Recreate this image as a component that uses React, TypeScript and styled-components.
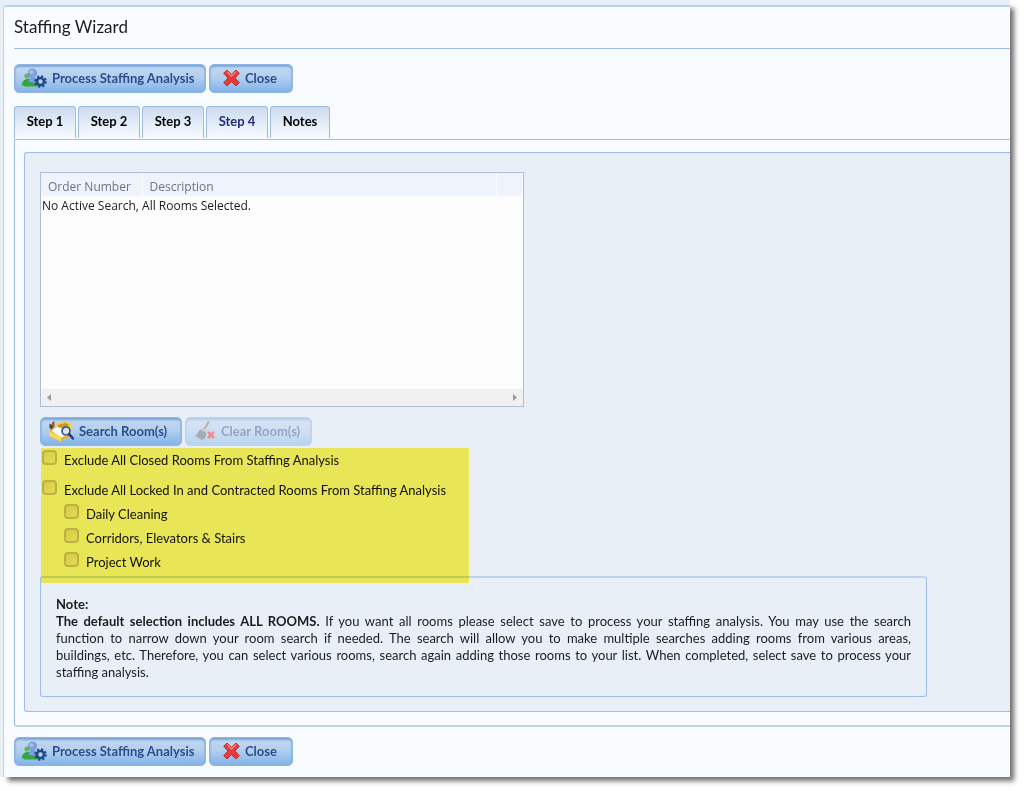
import React, { useState } from "react";
import styled, { createGlobalStyle } from "styled-components";

const line = "#9dbde8";
const softLine = "#bdd3ef";
const paper = "#f8fbff";
const mist = "#e8eff7";

const GlobalStyle = createGlobalStyle`
  *, *::before, *::after { box-sizing: border-box; }
  body {
    margin: 0;
    background: #fff;
    color: #1c1c1c;
    font-family: Lato, "Liberation Sans", sans-serif;
    font-size: 13px;
    line-height: 18px;
  }
`;

const Sheet = styled.main`
  margin: 0 14px 14px 0;
  padding: 5px 0 0 3px;
  background: ${mist};
  box-shadow: 6px 6px 5px -2px #6e6e6e;
`;

const Panel = styled.section`
  padding: 0 0 11px 10px;
  background: ${paper};
  border-top: 2px solid ${softLine};
  border-left: 1px solid ${softLine};
  border-top-left-radius: 3px;
`;

const Title = styled.h1`
  margin: 0 0 15px;
  padding: 8px 0 9px;
  border-bottom: 1px solid ${line};
  font-size: 17px;
  font-weight: 400;
  line-height: 24px;
`;

const Toolbar = styled.div`
  display: flex;
  gap: 3px;
`;

const Button = styled.button<{ $width: number; $inset?: number }>`
  display: flex;
  align-items: center;
  gap: 5px;
  min-width: ${(p) => p.$width}px;
  height: 29px;
  padding: 0 7px 2px ${(p) => p.$inset ?? 7}px;
  border: 1px solid #8db4e3;
  border-radius: 5px;
  background: linear-gradient(#c3d8f0, #b4cfee 45%, #82b3e8);
  box-shadow: inset 0 2px 2px #7aa6dc, inset 0 0 2px #8fb6e4;
  color: #2c4d8c;
  font: 700 13px/18px Lato, "Liberation Sans", sans-serif;
  white-space: nowrap;

  &:disabled {
    opacity: 0.45;
  }
`;

const Tabs = styled.nav`
  display: flex;
  gap: 2px;
  margin-top: 13px;
  padding-bottom: 1px;
`;

const Tab = styled.button<{ $active?: boolean }>`
  min-width: 62px;
  height: 32px;
  padding: 0 8px 3px;
  border: 1px solid ${line};
  border-bottom: 0;
  border-radius: 3px 3px 0 0;
  background: linear-gradient(#cbdbef, ${paper});
  color: ${(p) => (p.$active ? "#1f2d7a" : "#000")};
  font: 700 13px/18px Lato, "Liberation Sans", sans-serif;

  &:last-child {
    min-width: 60px;
  }
`;

const TabBody = styled.div`
  padding: 12px 0 13px 9px;
  border: 1px solid ${line};
  border-right: 0;
  border-bottom: 2px solid ${softLine};
  border-bottom-left-radius: 3px;
  margin-bottom: 10px;
`;

const Inset = styled.div`
  padding: 19px 83px 14px 15px;
  background: ${mist};
  border: 1px solid ${line};
  border-right: 0;
  border-radius: 3px 0 0 3px;
`;

const Grid = styled.div`
  display: flex;
  flex-direction: column;
  justify-content: space-between;
  max-width: 484px;
  min-height: 235px;
  margin-bottom: 10px;
  border: 1px solid #aebfd5;
  background: #fcfcfc;
  font-family: "Open Sans", "Noto Sans", sans-serif;
  font-size: 12px;
`;

const Table = styled.table`
  width: 100%;
  border-collapse: collapse;
  table-layout: fixed;
`;

const HeadCell = styled.th<{ $width?: number }>`
  width: ${(p) => (p.$width ? p.$width + "px" : "auto")};
  height: 23px;
  padding: 4px 0 0 7px;
  background: #eff3fb;
  border-right: 1px solid #fcfdff;
  color: #6a7587;
  font-weight: 400;
  line-height: 18px;
  text-align: left;
`;

const Cell = styled.td`
  padding: 1px;
  line-height: 18px;
`;

const ScrollTrack = styled.div`
  display: flex;
  justify-content: space-between;
  height: 17px;
  background: #f0f0f0;
`;

const ScrollButton = styled.button`
  display: flex;
  align-items: center;
  justify-content: center;
  width: 16px;
  padding: 0;
  border: 0;
  background: none;
`;

const Options = styled.fieldset`
  position: relative;
  margin: 0;
  padding: 0 0 4px 2px;
  border: 0;
`;

const Marker = styled.div`
  position: absolute;
  top: 2px;
  left: 1px;
  width: 428px;
  bottom: -7px;
  background: #fff65a;
  mix-blend-mode: multiply;
  pointer-events: none;
`;

const Option = styled.label<{ $nested?: boolean; $spaced?: boolean }>`
  display: flex;
  gap: 7px;
  height: 24px;
  padding: 4px 0 0 ${(p) => (p.$nested ? 22 : 0)}px;
  margin-bottom: ${(p) => (p.$spaced ? 6 : 0)}px;
  color: #111;
`;

const OptionText = styled.span`
  padding-top: 1px;
`;

const Check = styled.input`
  appearance: none;
  width: 15px;
  height: 15px;
  margin: 0;
  border: 2px solid #bdb9b6;
  border-radius: 4px;
  background: linear-gradient(135deg, #d6d4d4, #e4e4e4);

  &:checked {
    background: #5a7fb5;
  }
`;

const Note = styled.div`
  max-width: 888px;
  padding: 18px 15px 15px;
  border: 1px solid ${line};
  border-top: 2px solid ${softLine};
  border-radius: 3px;
  line-height: 17px;

  p {
    margin: 0;
  }
`;

const NoteLine = styled.span<{ $last?: boolean }>`
  display: block;
  text-align: justify;
  text-align-last: ${(p) => (p.$last ? "left" : "justify")};
`;

const StaffIcon = () => (
  <svg width="25" height="20" viewBox="0 0 25 20" aria-hidden="true">
    <circle cx="5" cy="8" r="2.6" fill="#5cb85a" />
    <path d="M0 17.5c0-4 2-6 5-6.500h5v6.500z" fill="#2fa534" />
    <path d="M2 18.500c0-4 3-6 8.500-6s6 2 6 6z" fill="#35a83a" />
    <path d="M6.500 13.500c0-2 1.500-3.500 3-4C5 7.500 5.500 1 10.500 1s5.500 6.500 1 8.500c2 .5 3.500 2 3.500 4-2 1.500-6.500 1.500-8.500 0z" fill="#7f9fe0" stroke="#6585c8" strokeWidth=".6" />
    <circle cx="9.500" cy="4" r="1.900" fill="#a9c2f2" />
    <circle cx="18.500" cy="13.500" r="3.500" fill="#b8d2ee" stroke="#1f4a86" strokeWidth="2.600" />
    <circle cx="18.500" cy="13.500" r="5.300" fill="none" stroke="#1f4a86" strokeWidth="2" strokeDasharray="2.080 2.080" />
  </svg>
);

const CloseIcon = () => (
  <svg width="17" height="18" viewBox="0 0 17 18" aria-hidden="true">
    <path
      d="M4 1 8.500 5.300 13 1l3.300 3.200L12 9l4.300 4.700L13 17l-4.500-4.300L4 17 .7 13.700 5 9 .7 4.200z"
      fill="#e8393c"
      stroke="#b5342f"
      strokeWidth="1"
      strokeLinejoin="round"
    />
    <path d="M4 2.500 8.500 7 13 2.500" fill="none" stroke="#f58a84" strokeWidth="1.300" />
  </svg>
);

const SearchRoomIcon = () => (
  <svg width="26" height="22" viewBox="0 0 26 22" aria-hidden="true">
    <path d="M8 3.500 18 1l5 3v9H9z" fill="#f0d24a" />
    <path d="M10 4.800 18 3l2.500 1.700V9H10z" fill="#c9962a" />
    <path d="M1 11 4 8.500l18 3.500v4l-9 5.500L1 16z" fill="#e2b72c" />
    <path d="M3.500 11 9 7l12 2.500v5L13 17.500z" fill="#fafafa" />
    <path d="M1 11l12 6.500v4L1 16z" fill="#f6da5c" />
    <path d="M1.500 3.500 4 5v4.500L1.500 8z" fill="#5d3d1c" />
    <path d="M4 2.500 6.500 1v6L4 9z" fill="#8a5f2d" />
    <circle cx="18" cy="11" r="4" fill="#d4e6f8" stroke="#34588f" strokeWidth="1.700" />
    <path d="M21 14l4 4.500" stroke="#203c70" strokeWidth="2.500" strokeLinecap="round" />
  </svg>
);

const ClearRoomIcon = () => (
  <svg width="21" height="20" viewBox="0 0 21 20" aria-hidden="true">
    <path d="M13.500 1 9.500 8" stroke="#8c6a42" strokeWidth="2.200" strokeLinecap="round" />
    <path d="M7 6.500l5.500 3-1.500 3L5 9z" fill="#aaa" />
    <path d="M5 8.500l6.500 3.500-1.500 5.500L6 19l-1-2-1.500 1L3 15.500 0 16z" fill="#555a60" />
    <path d="M13 11l6 6M19 11l-6 6" stroke="#f01b22" strokeWidth="3" />
  </svg>
);

const Arrow = ({ left }: { left?: boolean }) => (
  <svg width="4" height="7" viewBox="0 0 4 7" aria-hidden="true">
    <path d={left ? "M4 0v7L0 3.500z" : "M0 0v7l4-3.500z"} fill="#999" />
  </svg>
);

const Actions = () => (
  <Toolbar>
    <Button type="button" $width={192}>
      <StaffIcon />
      Process Staffing Analysis
    </Button>
    <Button type="button" $width={84} $inset={13}>
      <CloseIcon />
      Close
    </Button>
  </Toolbar>
);

const steps = ["Step 1", "Step 2", "Step 3", "Step 4", "Notes"];

const options = [
  { text: "Exclude All Closed Rooms From Staffing Analysis", spaced: true },
  { text: "Exclude All Locked In and Contracted Rooms From Staffing Analysis" },
  { text: "Daily Cleaning", nested: true },
  { text: "Corridors, Elevators & Stairs", nested: true },
  { text: "Project Work", nested: true },
];

export default function App() {
  const [active, setActive] = useState("Step 4");
  return (
    <>
      <GlobalStyle />
      <Sheet>
        <Panel>
          <Title>Staffing Wizard</Title>
          <Actions />
          <Tabs>
            {steps.map((s) => (
              <Tab key={s} type="button" $active={s === active} onClick={() => setActive(s)}>
                {s}
              </Tab>
            ))}
          </Tabs>
          <TabBody>
            <Inset>
              <Grid>
                <Table>
                  <thead>
                    <tr>
                      <HeadCell $width={101}>Order Number</HeadCell>
                      <HeadCell>Description</HeadCell>
                      <HeadCell $width={26} aria-label="Actions" />
                    </tr>
                  </thead>
                  <tbody>
                    <tr>
                      <Cell colSpan={3}>No Active Search, All Rooms Selected.</Cell>
                    </tr>
                  </tbody>
                </Table>
                <ScrollTrack>
                  <ScrollButton type="button" aria-label="Scroll left">
                    <Arrow left />
                  </ScrollButton>
                  <ScrollButton type="button" aria-label="Scroll right">
                    <Arrow />
                  </ScrollButton>
                </ScrollTrack>
              </Grid>
              <Toolbar>
                <Button type="button" $width={142}>
                  <SearchRoomIcon />
                  Search Room(s)
                </Button>
                <Button type="button" disabled $width={127} $inset={9}>
                  <ClearRoomIcon />
                  Clear Room(s)
                </Button>
              </Toolbar>
              <Options>
                {options.map((o) => (
                  <Option key={o.text} $nested={o.nested} $spaced={o.spaced}>
                    <Check type="checkbox" />
                    <OptionText>{o.text}</OptionText>
                  </Option>
                ))}
                <Marker />
              </Options>
              <Note>
                <p>
                  <strong>Note:</strong>
                </p>
                <p>
                  <NoteLine>
                    <strong>The default selection includes ALL ROOMS.</strong> If you want all rooms
                    please select save to process your staffing analysis. You may use the search
                  </NoteLine>
                  <NoteLine>
                    function to narrow down your room search if needed. The search will allow you to
                    make multiple searches adding rooms from various areas,
                  </NoteLine>
                  <NoteLine>
                    buildings, etc. Therefore, you can select various rooms, search again adding
                    those rooms to your list. When completed, select save to process your
                  </NoteLine>
                  <NoteLine $last>staffing analysis.</NoteLine>
                </p>
              </Note>
            </Inset>
          </TabBody>
          <Actions />
        </Panel>
      </Sheet>
    </>
  );
}
